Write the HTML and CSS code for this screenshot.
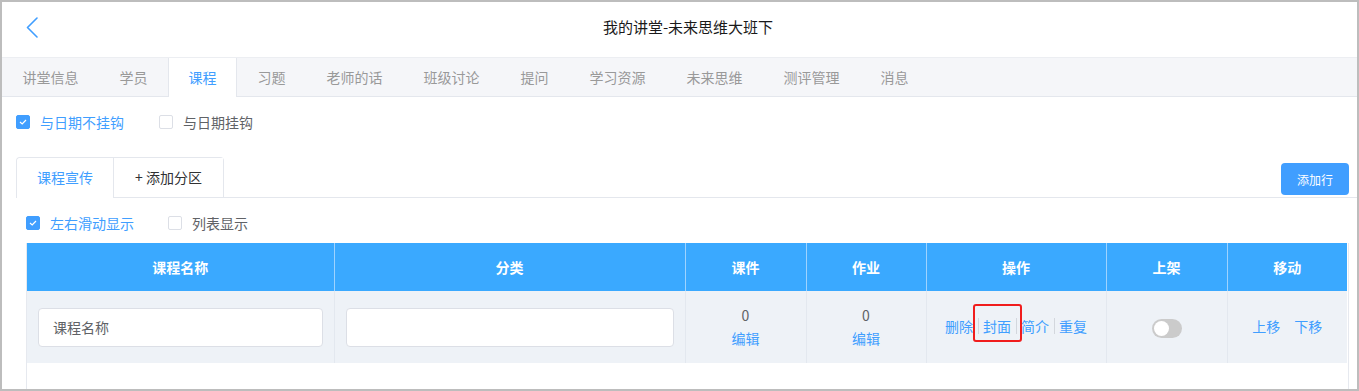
FILE: index.html
```html
<!DOCTYPE html>
<html lang="zh-CN">
<head>
<meta charset="utf-8">
<title>我的讲堂-未来思维大班下</title>
<link rel="stylesheet" href="styles.css">
</head>
<body>
<div class="frame">
  <header class="topbar">
    <a class="back" href="#" aria-label="返回">
      <svg width="12" height="21" viewBox="0 0 12 21"><path d="M11 1 L1.5 10.5 L11 20" fill="none" stroke="#409eff" stroke-width="1.6" stroke-linecap="round" stroke-linejoin="round"/></svg>
    </a>
    <h1 class="title">我的讲堂-未来思维大班下</h1>
  </header>

  <nav class="tabs">
    <span class="tab">讲堂信息</span>
    <span class="tab">学员</span>
    <span class="tab active">课程</span>
    <span class="tab">习题</span>
    <span class="tab">老师的话</span>
    <span class="tab">班级讨论</span>
    <span class="tab">提问</span>
    <span class="tab">学习资源</span>
    <span class="tab">未来思维</span>
    <span class="tab">测评管理</span>
    <span class="tab">消息</span>
  </nav>

  <main class="content">
    <div class="checks checks-top">
      <label class="check on"><span class="box"><svg width="8" height="6" viewBox="0 0 8 6"><path d="M1 3 L3.2 5 L7 1" fill="none" stroke="#fff" stroke-width="1.2"/></svg></span>与日期不挂钩</label>
      <label class="check"><span class="box"></span>与日期挂钩</label>
    </div>

    <div class="subtabs">
      <div class="subtab-list">
        <span class="subtab active">课程宣传</span>
        <span class="subtab add">+ 添加分区</span>
      </div>
      <button class="btn-add">添加行</button>
    </div>

    <div class="panel">
      <div class="checks checks-view">
        <label class="check on"><span class="box"><svg width="8" height="6" viewBox="0 0 8 6"><path d="M1 3 L3.2 5 L7 1" fill="none" stroke="#fff" stroke-width="1.2"/></svg></span>左右滑动显示</label>
        <label class="check"><span class="box"></span>列表显示</label>
      </div>

      <div class="table-wrap">
        <table class="grid">
          <colgroup>
            <col class="c-name"><col class="c-cat"><col class="c-ware"><col class="c-work"><col class="c-ops"><col class="c-shelf"><col class="c-move">
          </colgroup>
          <thead>
            <tr><th>课程名称</th><th>分类</th><th>课件</th><th>作业</th><th>操作</th><th>上架</th><th>移动</th></tr>
          </thead>
          <tbody>
            <tr>
              <td><div class="input">课程名称</div></td>
              <td><div class="input"></div></td>
              <td><div class="count">0</div><a class="link" href="#">编辑</a></td>
              <td><div class="count">0</div><a class="link" href="#">编辑</a></td>
              <td>
                <div class="ops">
                  <a class="link" href="#">删除</a><span class="hl"><i class="sep"></i><a class="link" href="#">封面</a><i class="sep"></i></span><a class="link" href="#">简介</a><i class="sep"></i><a class="link" href="#">重复</a>
                </div>
              </td>
              <td><span class="switch"><span class="knob"></span></span></td>
              <td><div class="move"><a class="link" href="#">上移</a><a class="link" href="#">下移</a></div></td>
            </tr>
          </tbody>
        </table>
      </div>
    </div>
  </main>
</div>
</body>
</html>
```
FILE: styles.css
```css
* { box-sizing: border-box; }
html, body { margin: 0; padding: 0; background: #fff; }
body {
  font-family: "Noto Sans CJK SC", "Microsoft YaHei", "Noto Sans", sans-serif;
  font-size: 14px;
  color: #606266;
}
a { text-decoration: none; }

.frame {
  width: 1359px;
  height: 391px;
  border: 2px solid #bdbdbd;
  overflow: hidden;
  background: #fff;
}

/* top bar */
.topbar {
  height: 55px;
  display: flex;
  align-items: center;
  padding: 0 0 5px 24px;
}
.back { display: flex; width: 12px; height: 21px; }
.title {
  flex: 1;
  margin: 0;
  padding-right: 19px;
  text-align: center;
  font-size: 15px;
  font-weight: 400;
  color: #1a1a1a;
  line-height: 20px;
}

/* main tabs */
.tabs {
  display: flex;
  height: 40px;
  background: #f5f6f9;
  border-top: 1px solid #eceef2;
  border-bottom: 1px solid #e4e7ed;
}
.tab {
  padding: 0 20.5px;
  line-height: 38px;
  height: 38px;
  color: #999;
  white-space: nowrap;
}
.tab.active {
  background: #fff;
  color: #409eff;
  height: 39px;
  box-shadow: inset 1px 0 #e4e7ed, inset -1px 0 #e4e7ed;
}

/* content */
.content { padding-left: 14px; }

.checks { display: flex; align-items: center; height: 14px; }
.checks-top { margin-top: 18px; }
.check {
  display: flex;
  align-items: center;
  margin-right: 35px;
  line-height: 14px;
  color: #606266;
  white-space: nowrap;
}
.check .box {
  width: 14px;
  height: 14px;
  border: 1px solid #dcdfe6;
  border-radius: 2px;
  background: #fff;
  margin-right: 10px;
  display: flex;
  align-items: center;
  justify-content: center;
}
.check.on { color: #409eff; }
.check.on .box { background: #409eff; border-color: #409eff; }

/* sub tabs */
.subtabs {
  margin-top: 28px;
  display: flex;
  justify-content: space-between;
  align-items: flex-end;
  border-bottom: 1px solid #e4e7ed;
}
.subtab-list {
  display: flex;
  border: 1px solid #e4e7ed;
  border-bottom: none;
  border-radius: 4px 4px 0 0;
  margin-bottom: -1px;
}
.subtab {
  height: 40px;
  line-height: 39px;
  padding: 0 20px;
  color: #303133;
  background: #fff;
  white-space: nowrap;
}
.subtab.add { border-left: 1px solid #e4e7ed; border-bottom: 1px solid #e4e7ed; padding: 0 21px; }
.subtab.active { color: #409eff; border-radius: 4px 0 0 0; }
.btn-add {
  width: 68px;
  height: 32px;
  margin: 0 8px 2px 0;
  border: none;
  border-radius: 4px;
  background: #409eff;
  color: #fff;
  font-family: inherit;
  font-size: 12px;
  padding: 0;
}

/* panel */
.panel { padding: 0 8px 0 10px; }
.checks-view { margin-top: 18px; }
.checks-view .check { margin-right: 34px; }

.table-wrap {
  margin-top: 13px;
  border-left: 1px solid #e6e9ef;
  border-right: 1px solid #e6e9ef;
  height: 160px;
}
.grid {
  width: 1320px;
  border-collapse: collapse;
  table-layout: fixed;
}
.c-name { width: 307px; }
.c-cat { width: 351px; }
.c-ware { width: 121px; }
.c-work { width: 120px; }
.c-ops { width: 180px; }
.c-shelf { width: 121px; }
.c-move { width: 120px; }

.grid th {
  height: 48px;
  background: #3aa9ff;
  color: #fff;
  font-weight: 700;
  font-size: 14px;
  padding: 0;
  border-left: 1px solid #9ed3ff;
}
.grid th:first-child { border-left: none; }
.grid td {
  height: 72px;
  background: #eef2f7;
  border-left: 1px solid #e3e8ef;
  padding: 0 11px;
  text-align: center;
  vertical-align: middle;
  line-height: 23px;
}
.grid td:first-child { border-left: none; }

.input {
  height: 39px;
  border: 1px solid #dcdfe6;
  border-radius: 4px;
  background: #fff;
  padding-left: 14px;
  text-align: left;
  line-height: 37px;
  color: #606266;
}
.count { color: #606266; }
.link { color: #409eff; }

.ops { display: flex; justify-content: center; align-items: center; line-height: 20px; margin-top: -2px; }
.sep { display: block; width: 1px; height: 16px; background: #d3d7dd; margin: 0 4px 0 5px; }
.hl { position: relative; display: flex; align-items: center; }
.hl::after {
  content: "";
  position: absolute;
  left: 0;
  right: -1px;
  top: -12px;
  bottom: -6px;
  border: 2px solid #f01d1d;
  border-radius: 3px;
}

.switch {
  display: inline-block;
  width: 30px;
  height: 19px;
  border-radius: 10px;
  background: #cbcbcb;
  position: relative;
  vertical-align: middle;
}
.knob {
  position: absolute;
  left: 2px;
  top: 2px;
  width: 15px;
  height: 15px;
  border-radius: 50%;
  background: #fff;
}

.move { display: flex; justify-content: center; gap: 14px; margin-top: -2px; }
```
